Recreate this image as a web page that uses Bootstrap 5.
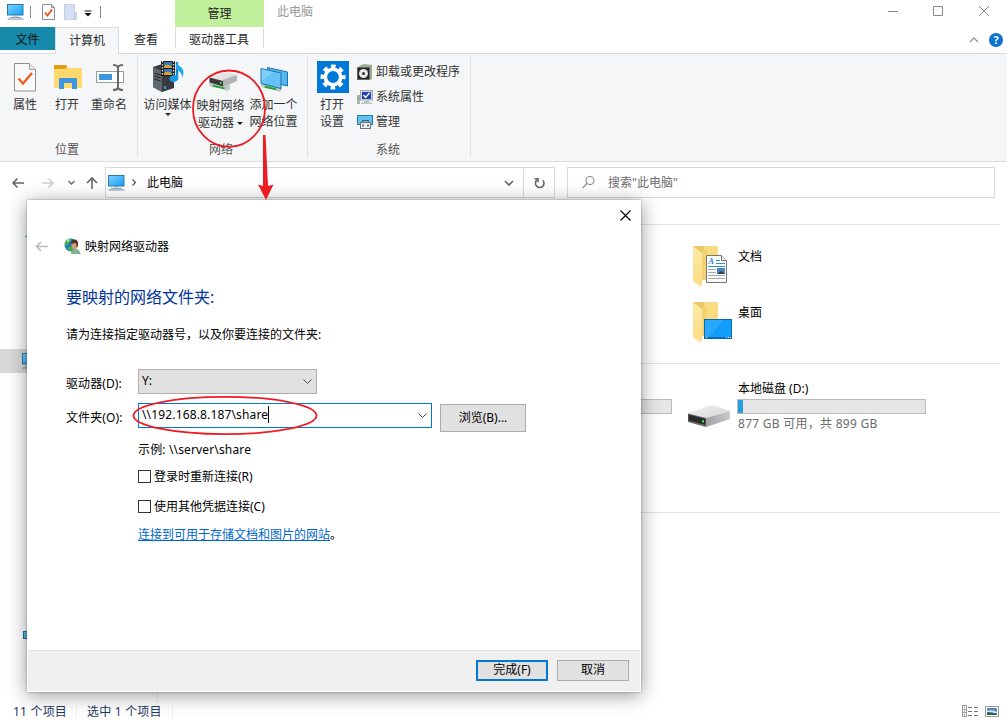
<!DOCTYPE html>
<html lang="zh-CN">

<head>
    <meta charset="utf-8">
    <meta name="viewport" content="width=device-width, initial-scale=1">
    <title>此电脑</title>
    <link href="https://cdn.jsdelivr.net/npm/bootstrap@5.3.0/dist/css/bootstrap.min.css" rel="stylesheet">
    <style>
        body {
            font-family: "Noto Sans", "Noto Sans CJK SC", sans-serif;
            font-size: 12px;
            line-height: 16px;
            color: #000;
            overflow: hidden;
        }
        svg { display: block; flex: none; }
        .explorer { width: 1007px; height: 721px; }

        /* title bar and tabs */
        .title-bar { height: 27px; }
        .quick-access { width: 175px; padding-left: 7px; }
        .quick-sep { width: 1px; height: 12px; background: #8c8c8c; }
        .ctx-title { width: 89px; height: 27px; background: #c0f09b; color: #222; padding-top: 1px; }
        .win-title { color: #999; padding-left: 13px; padding-bottom: 3px; }
        .tab-bar { height: 27px; border-bottom: 1px solid #dadbdc; }
        .tab-item { height: 26px; color: #262626; }
        .tab-file { width: 55px; height: 23px; background: #178aac; color: #111; padding-top: 2px; }
        .tab-active { width: 64px; height: 27px; background: #f5f6f7; border: 1px solid #dadbdc; border-bottom: 0; }
        .tab-view { width: 56px; padding-right: 2px; }
        .tab-tools { width: 89px; border: solid #dadbdc; border-width: 0 1px; height: 20px; margin-top: 1px; padding-top: 4px; padding-right: 1px; }

        /* ribbon */
        .ribbon { height: 108px; background: #f5f6f7; border-bottom: 1px solid #dadbdc; color: #333; }
        .ribbon-group { border-right: 1px solid #e2e3e4; margin: 2px 0 3px; }
        .ribbon-group .big-btn { width: 42px; line-height: 17px; text-align: center; white-space: nowrap; }
        .ribbon-group .wide-btn { width: 53px; }
        .big-icon { height: 40px; padding-top: 5px; }
        .group-name { color: #555; height: 16px; padding-right: 2px; }
        .down-mark { display: inline-block; border: 3px solid transparent; border-top-color: #222; border-bottom: 0; vertical-align: 2px; }
        .small-btn { height: 25px; gap: 3px; }

        /* address bar */
        .address-row { height: 41px; padding-top: 5px; }
        .nav-arrows { width: 105px; height: 31px; }
        .path-box { width: 450px; height: 31px; border: 1px solid #d9d9d9; }
        .refresh-btn { width: 31px; height: 29px; border-left: 1px solid #d9d9d9; }
        .search-box { width: 428px; height: 31px; margin-left: 12px; border: 1px solid #d9d9d9; color: #6d6d6d; padding-left: 13px; gap: 12px; }

        /* content */
        .side-nav { width: 158px; border-right: 1px solid #f0f0f0; }
        .side-item { height: 24px; padding-left: 22px; }
        .side-item.selected { background: #d9d9d9; }
        .main-pane { padding: 21px 7px 0 0; }
        .pane-section { border-top: 1px solid #e2e2e2; }
        .tile-col { width: 254px; }
        .tile-first { margin-left: 22px; }
        .tile { height: 56px; }
        .tile-name { padding-top: 3px; }
        .tile-icon { width: 50px; flex: none; }
        .usage { width: 189px; height: 15px; background: #e6e6e6; border: 1px solid #bcbcbc; }
        .usage-fill { height: 13px; background: #26a0da; }
        .usage-text { color: #6d6d6d; letter-spacing: .27px; }

        .status-bar { height: 19px; color: #1e395b; padding: 0 7px 0 13px; letter-spacing: .2px; }
        .status-sep { width: 1px; height: 12px; background: #efefef; }

        /* dialog */
        .map-dialog {
            position: absolute; left: 27px; top: 200px; width: 614px; height: 492px;
            background: #fff; border: 1px solid #fff; border-top: 0;
            box-shadow: 0 3px 18px rgba(0, 0, 0, .42), 0 0 2px rgba(0, 0, 0, .35);
        }
        .dlg-caption { height: 31px; padding-right: 10px; }
        .dlg-head { height: 30px; padding-left: 7px; }
        .dlg-body { padding-left: 38px; }
        .dlg-title { font-size: 16px; line-height: 24px; color: #039; margin: 24px 0 18px; }
        .field-label { width: 72px; letter-spacing: .1px; }
        .combo { height: 25px; border: 1px solid #adadad; background: #e1e1e1; padding: 0 4px 1px 3px; }
        .combo-drive { width: 179px; }
        .combo-folder { width: 294px; background: #fff; border-color: #0078d7; padding-bottom: 2px; }
        .path-text { letter-spacing: .15px; }
        .caret-bar { width: 1px; height: 17px; background: #000; }
        .win-btn { background: #e1e1e1; border: 1px solid #adadad; color: #000; font: inherit; padding: 0; height: 21px; width: 72px; }
        .win-btn-default { border: 2px solid #0078d7; }
        .browse-btn { width: 86px; height: 28px; margin: 1px 0 0 8px; }
        .indent-72 { padding-left: 72px; }
        .check-row { height: 16px; }
        .check-row span { padding-top: 1px; }
        .check-square { width: 13px; height: 13px; border: 1px solid #333; background: #fff; margin-right: 3px; }
        .dlg-link { color: #0066cc; }
        .dlg-footer { height: 41px; background: #f0f0f0; border-top: 1px solid #dfdfdf; padding: 0 11px 2px 0; gap: 9px; }
        .marks { position: absolute; left: 0; top: 0; pointer-events: none; }
    </style>
</head>

<body>
    <!-- shared shapes -->
    <svg width="0" height="0" class="position-absolute">
        <defs>
            <linearGradient id="screenFill" x1="0" y1="0" x2="1" y2="1">
                <stop offset="0" stop-color="#7fd0ff" />
                <stop offset="1" stop-color="#12a0f5" />
            </linearGradient>
            <linearGradient id="diskTop" x1="0" y1="0" x2="1" y2="1">
                <stop offset="0" stop-color="#f0f0f0" />
                <stop offset="1" stop-color="#cfcfd1" />
            </linearGradient>
            <linearGradient id="diskSide" x1="0" y1="0" x2="1" y2="0">
                <stop offset="0" stop-color="#a2a2a5" />
                <stop offset="1" stop-color="#c9c9cb" />
            </linearGradient>
            <linearGradient id="folderFront" x1="0" y1="0" x2="0" y2="1">
                <stop offset="0" stop-color="#ffeaa8" />
                <stop offset="1" stop-color="#fbdc82" />
            </linearGradient>
            <symbol id="pc" viewBox="0 0 17 16">
                <rect x=".5" y=".5" width="15.500" height="10.500" fill="url(#screenFill)" stroke="#2a7aa8" />
                <path d="M6 12h5M3 13.500h11" stroke="#8fa9bd" />
                <path d="M.5 15h16" stroke="#7b92ad" />
            </symbol>
            <symbol id="folder" viewBox="0 0 30 40">
                <path d="M0 0h25v34H9z" fill="#fadc80" />
                <path d="M0 0h12L9 8z" fill="#ecc768" />
                <path d="M9 7l5-5v32H9z" fill="#f0cd6c" opacity=".7" />
                <path d="M0 0l9 7v32l-2 1-7-5z" fill="url(#folderFront)" />
            </symbol>
            <symbol id="disk" viewBox="0 0 42 22">
                <path d="M0 8L24 0l18 6v8L18 22 0 17z" fill="url(#diskTop)" />
                <path d="M18 13l24-6.500v7.500L18 22z" fill="url(#diskSide)" />
                <path d="M0 8.500l18 4.500v9L0 17z" fill="#6e6e70" />
                <path d="M.5 9.500l17 4.300v6.200l-17-4.500z" fill="#2a2a2c" />
                <rect x="14" y="15.300" width="2" height="2.200" fill="#3cf04b" />
            </symbol>
            <symbol id="pipe" viewBox="0 0 24 10">
                <path d="M3 2.500l15 3.500" stroke="#2c9a3f" stroke-width="5" />
                <path d="M3 1.800l15 3.500" stroke="#79d37d" stroke-width="2" />
                <path d="M0 .500l4-.5v6L0 4zM17 4l4-1 2 1v4l-3 2-3-1z" fill="#c3c9c9" />
            </symbol>
        </defs>
    </svg>

    <div class="explorer d-flex flex-column position-relative bg-white">
        <div class="title-bar d-flex">
            <div class="quick-access d-flex align-items-center pb-1">
                <svg width="17" height="16"><use href="#pc" /></svg>
                <div class="quick-sep" style="margin:0 11px 0 6px"></div>
                <svg width="13" height="16" viewBox="0 0 13 16">
                    <path d="M.5.500h9l3 3v12H.5z" fill="#fafafa" stroke="#8e8e8e" />
                    <path d="M9.500.500v3h3" fill="none" stroke="#8e8e8e" />
                    <path d="M3 8.500l2.500 3 4.500-6" fill="none" stroke="#e8551d" stroke-width="1.800" />
                </svg>
                <svg width="13" height="16" viewBox="0 0 13 16" style="margin-left:9px">
                    <path d="M.5.500h10v8h2v7H.5z" fill="#d5e0f2" stroke="#c5d1e8" />
                    <path d="M10.500 8.500v7" stroke="#b6c5e0" />
                </svg>
                <svg width="8" height="7" viewBox="0 0 8 7" style="margin:3px 8px 0 7px">
                    <path d="M.500 1h7" stroke="#111" />
                    <path d="M.500 3h7L4 6.500z" fill="#111" />
                </svg>
                <div class="quick-sep"></div>
            </div>
            <div class="ctx-title d-flex align-items-center justify-content-center">管理</div>
            <div class="win-title d-flex align-items-center flex-grow-1">此电脑</div>
            <svg width="119" height="23" viewBox="0 0 119 23" fill="none" stroke="#8a8a8a">
                <path d="M0 11.500h10M45.500 6.500h9v9h-9zM91 6l10 10M101 6L91 16" />
            </svg>
        </div>

        <div class="tab-bar d-flex align-items-start">
            <div class="tab-file d-flex align-items-center justify-content-center">文件</div>
            <div class="tab-item tab-active d-flex align-items-center justify-content-center">计算机</div>
            <div class="tab-item tab-view d-flex align-items-center justify-content-center">查看</div>
            <div class="tab-item tab-tools text-center">驱动器工具</div>
            <svg class="ms-auto" width="38" height="24" viewBox="0 0 38 24">
                <path d="M1 15l4-4 4 4" fill="none" stroke="#999" stroke-width="1.300" />
                <circle cx="27" cy="13" r="7" fill="#0a72d0" />
                <text x="27" y="17" font-size="11" font-weight="bold" fill="#fff" text-anchor="middle">?</text>
            </svg>
        </div>

        <div class="ribbon d-flex">
            <div class="ribbon-group d-flex flex-column" style="width:138px">
                <div class="d-flex flex-grow-1" style="padding-left:4px">
                    <div class="big-btn">
                        <div class="big-icon d-flex justify-content-center">
                            <svg width="22" height="30" viewBox="0 0 22 30" style="margin-top:2px">
                                <path d="M.5.500h15l6 6V28H.5z" fill="#fafafa" stroke="#8e8e8e" />
                                <path d="M15.500.500v6h6" fill="#e8e8e8" stroke="#a0a0a0" />
                                <path d="M4.500 15.500l4.500 5 9-10.500" fill="none" stroke="#ee5f22" stroke-width="2.400" />
                            </svg>
                        </div>
                        属性
                    </div>
                    <div class="big-btn">
                        <div class="big-icon d-flex justify-content-center">
                            <svg width="28" height="28" viewBox="0 0 28 28" style="margin:3px 0 0 2px">
                                <path d="M0 2q0-1 1-1h11l2 3h14v20H0z" fill="#f9cf5f" />
                                <path d="M0 2q0-1 1-1h11l1 2-2 2H0z" fill="#dc9c16" />
                                <path d="M0 5h11l2-1h15v19q0 1-1 1H0z" fill="#ffd96f" />
                                <path d="M5 25V15q0-1 1-1h16q1 0 1 1v10h-5v-6h-8v6z" fill="#3c95de" />
                            </svg>
                        </div>
                        打开
                    </div>
                    <div class="big-btn">
                        <div class="big-icon d-flex justify-content-center">
                            <svg width="28" height="28" viewBox="0 0 28 28" style="margin:3px 0 0 2px">
                                <rect x=".5" y="7.500" width="27" height="11" fill="#fff" stroke="#9b9b9b" />
                                <rect x="3" y="10" width="13" height="6" fill="#3a96dd" />
                                <path d="M17 1q4 0 5 2 1-2 5-2M17 26q4 0 5-2 1 2 5 2M22 3v21" fill="none" stroke="#696969" stroke-width="2" />
                            </svg>
                        </div>
                        重命名
                    </div>
                </div>
                <div class="group-name text-center" style="padding-right:3px">位置</div>
            </div>

            <div class="ribbon-group d-flex flex-column" style="width:170px">
                <div class="d-flex flex-grow-1" style="padding-left:3px">
                    <div class="big-btn wide-btn">
                        <div class="big-icon d-flex justify-content-center">
                            <svg width="32" height="32" viewBox="0 0 32 32">
                                <path d="M1 6l12-4 9 4v21l-12 4-9-5z" fill="#363b40" />
                                <path d="M1 6l9 4v21l-9-5z" fill="#5f686e" />
                                <path d="M2.500 12l6 2M2.500 15l6 2M2.500 18l6 2" stroke="#1b1e20" />
                                <path d="M13 25v3" stroke="#37b7ff" stroke-width="1.500" />
                                <rect x="9" y="0" width="14" height="15" fill="#17191b" />
                                <path d="M10.500 0v15M21.500 0v15" stroke="#e6e6e6" stroke-width="1.300" stroke-dasharray="1.500 1.500" />
                                <rect x="12" y="1" width="8" height="6" fill="#3c78ba" />
                                <rect x="12" y="8" width="8" height="6" fill="#3c78ba" />
                                <path d="M12 5q4-3 8 1v1h-8zM12 12q4-3 8 1v1h-8z" fill="#d6a52d" />
                                <path d="M25 1v17" stroke="#1683cc" stroke-width="2.300" />
                                <ellipse cx="22" cy="17.500" rx="4.400" ry="3.400" fill="#159be8" transform="rotate(-15 22 17.500)" />
                                <path d="M24 0q1 4 5 6 4.500 4 1 10.500 0-6-6-8z" fill="#1da5ef" />
                            </svg>
                        </div>
                        访问媒体
                        <div style="line-height:2px"><span class="down-mark"></span></div>
                    </div>
                    <div class="big-btn wide-btn">
                        <div class="big-icon d-flex justify-content-center" style="height:41px">
                            <svg width="32" height="32" viewBox="0 0 32 32">
                                <svg x="4" y="21" width="22" height="9"><use href="#pipe" /></svg>
                                <path d="M5 16l15-5 12 3v6l-14 6-13-4z" fill="url(#diskTop)" />
                                <path d="M18 19l14-5v6l-14 6z" fill="#b4b4b7" />
                                <path d="M4.500 16.500L18 20v5.500L4.500 21.500z" fill="#38383a" />
                                <rect x="15" y="21" width="1.500" height="2" fill="#3cf04b" />
                            </svg>
                        </div>
                        映射网络<br>驱动器 <span class="down-mark"></span>
                    </div>
                    <div class="big-btn wide-btn">
                        <div class="big-icon d-flex justify-content-center">
                            <svg width="32" height="32" viewBox="0 0 32 32">
                                <svg x="2" y="22" width="24" height="9"><use href="#pipe" /></svg>
                                <path d="M9.500 6.500l20 4.500v14l-20-4.500z" fill="#55b6ee" stroke="#1d72ab" />
                                <path d="M3 7.500l20 4.500v15.500L3 22.500z" fill="#64c2f6" stroke="#1d72ab" />
                                <path d="M3.500 8l12 3-12 9z" fill="#9bdcff" opacity=".5" />
                            </svg>
                        </div>
                        添加一个<br>网络位置
                    </div>
                </div>
                <div class="group-name text-center" style="padding-right:3px">网络</div>
            </div>

            <div class="ribbon-group d-flex flex-column" style="width:163px">
                <div class="d-flex flex-grow-1" style="padding-left:3px">
                    <div class="big-btn">
                        <div class="big-icon d-flex justify-content-center">
                            <svg width="32" height="32" viewBox="0 0 32 32" style="margin-left:2px">
                                <rect width="32" height="32" fill="#0078d7" />
                                <circle cx="16" cy="16" r="10.500" fill="none" stroke="#fff" stroke-width="4" stroke-dasharray="4.500 3.747" stroke-dashoffset="2.250" />
                                <circle cx="16" cy="16" r="7.700" fill="none" stroke="#fff" stroke-width="3.600" />
                            </svg>
                        </div>
                        打开<br>设置
                    </div>
                    <div style="padding:3px 0 0 4px">
                        <div class="small-btn d-flex align-items-center">
                            <svg width="16" height="16" viewBox="0 0 16 16">
                                <path d="M2 2l5-2 8 1v14l-4 1z" fill="#9bab94" />
                                <rect x=".5" y="3.500" width="12" height="12" fill="#252525" stroke="#666" />
                                <circle cx="6.500" cy="9.500" r="4.500" fill="#e8e8e8" />
                                <circle cx="6.500" cy="9.500" r="1.500" fill="#333" />
                            </svg>
                            <span>卸载或更改程序</span>
                        </div>
                        <div class="small-btn d-flex align-items-center">
                            <svg width="16" height="16" viewBox="0 0 16 16">
                                <path d="M0 6h3v9H0z" fill="#aab1b4" />
                                <path d="M1 8v3" stroke="#3dc34c" />
                                <rect x="3.500" y="1.500" width="12" height="9.500" fill="#d5d8da" stroke="#a5a9ad" />
                                <rect x="5" y="3" width="9" height="7" fill="#1d3fb5" />
                                <path d="M6.500 6l2 2.500L12.500 4" fill="none" stroke="#fff" stroke-width="1.400" />
                                <path d="M7 11.500h5v2h3v1.500H4v-1.500h3z" fill="#bec5c8" />
                            </svg>
                            <span>系统属性</span>
                        </div>
                        <div class="small-btn d-flex align-items-center">
                            <svg width="16" height="16" viewBox="0 0 16 16">
                                <rect x=".5" y="1.500" width="15" height="9" fill="#65bff0" stroke="#267cad" />
                                <path d="M5.500 9V6.500h6V9" fill="none" stroke="#4c5c66" />
                                <rect x="3.500" y="8.500" width="10" height="6" fill="#edf0f2" stroke="#66747d" />
                                <path d="M6 10.500v2M11 10.500v2" stroke="#42505a" stroke-width="1.500" />
                            </svg>
                            <span>管理</span>
                        </div>
                    </div>
                </div>
                <div class="group-name text-center">系统</div>
            </div>
        </div>

        <div class="address-row d-flex">
            <svg class="nav-arrows" viewBox="0 0 105 31" fill="none" stroke="#666" stroke-width="1.600">
                <path d="M24 16H13M17.500 11.500L13 16l4.500 4.500" />
                <path d="M42 16h11M48.500 11.500L53 16l-4.500 4.500" stroke="#d0d0d0" />
                <path d="M68.500 14l3 3 3-3" stroke-width="1.400" />
                <path d="M92 22V11M87 16l5-5 5 5" />
            </svg>
            <div class="path-box d-flex align-items-center">
                <svg width="17" height="16" style="margin-left:2px"><use href="#pc" /></svg>
                <svg width="9" height="9" viewBox="0 0 9 9" style="margin:0 8px 0 5px" fill="none" stroke="#555" stroke-width="1.200"><path d="M2.500 1.500l3 3-3 3" /></svg>
                <span>此电脑</span>
                <svg class="ms-auto" width="10" height="8" viewBox="0 0 10 8" style="margin-right:9px" fill="none" stroke="#666" stroke-width="1.700"><path d="M1 2l4 4 4-4" /></svg>
                <div class="refresh-btn d-flex align-items-center justify-content-center">
                    <svg width="13" height="13" viewBox="0 0 13 13" fill="none" stroke="#666" stroke-width="1.600" style="margin-top:1px">
                        <path d="M9.800 3.200A4.300 4.300 0 1 1 4 2.900" />
                        <path d="M1.500 1.800H5v3.500" />
                    </svg>
                </div>
            </div>
            <div class="search-box d-flex align-items-center">
                <svg width="15" height="15" viewBox="0 0 15 15" fill="none" stroke="#8a8a8a" stroke-width="1.100">
                    <circle cx="9" cy="5.500" r="4" />
                    <path d="M6 8.500L1.500 13" />
                </svg>
                <span>搜索"此电脑"</span>
            </div>
        </div>

        <div class="d-flex flex-grow-1" style="min-height:0">
            <div class="side-nav">
                <div class="side-item" style="margin-top:25px">
                    <svg width="17" height="16" viewBox="0 0 17 16"><path d="M3 8.500h6" stroke="#6cbce6" stroke-width="1.500" /></svg>
                </div>
                <div class="side-item selected d-flex align-items-center" style="margin-top:97px">
                    <svg width="17" height="16"><use href="#pc" /></svg>
                </div>
                <div class="side-item d-flex align-items-center" style="margin-top:250px">
                    <svg width="17" height="13" viewBox="0 0 17 13"><rect x="1.500" y="2.500" width="14" height="7" fill="#5cb8e8" stroke="#2a6d92" /></svg>
                </div>
            </div>
            <div class="main-pane flex-grow-1">
                <div class="pane-section d-flex" style="height:139px;padding-top:21px">
                    <div class="tile-col tile-first"></div>
                    <div class="tile-col"></div>
                    <div class="tile-col">
                        <div class="tile d-flex">
                            <div class="tile-icon" style="padding-left:5px">
                                <svg width="42" height="42" viewBox="0 0 42 42">
                                    <use href="#folder" width="30" height="40" />
                                    <path d="M13.500 9.500h15l5 5v22h-20z" fill="#fbfbfb" stroke="#777" />
                                    <path d="M28.500 9.500v5h5" fill="#eee" stroke="#777" />
                                    <text x="15.500" y="18" font-size="8" font-weight="bold" font-style="italic" fill="#1d7fc4" style="font-family:'Liberation Serif',serif">A</text>
                                    <path d="M23 14.500h4M23 17.500h9M15 20.500h17" stroke="#2d93d4" />
                                    <path d="M15 23.500h8M15 26.500h8M15 29.500h17M15 32.500h17" stroke="#a8a8a8" />
                                    <rect x="24" y="22" width="8" height="6" fill="#4d83ba" />
                                    <path d="M24 28l4-3 4 3z" fill="#24433a" />
                                </svg>
                            </div>
                            <div class="tile-name">文档</div>
                        </div>
                        <div class="tile d-flex">
                            <div class="tile-icon" style="padding-left:5px">
                                <svg width="42" height="42" viewBox="0 0 42 42">
                                    <use href="#folder" width="30" height="40" />
                                    <rect x="11.500" y="17.500" width="27" height="19" fill="#109dfb" stroke="#0869ac" />
                                    <path d="M12 18h19L15 36h-3z" fill="#35adff" opacity=".7" />
                                    <path d="M12 35.500h26" stroke="#0c6fb5" />
                                    <path d="M13 35.500h1M33 35.500h1M35 35.500h1M37 35.500h1" stroke="#fff" />
                                </svg>
                            </div>
                            <div class="tile-name">桌面</div>
                        </div>
                    </div>
                </div>
                <div class="pane-section d-flex" style="height:149px;padding-top:17px">
                    <div class="tile-col tile-first"></div>
                    <div class="tile-col">
                        <div class="usage" style="margin:18px 0 0 49px"></div>
                    </div>
                    <div class="tile-col d-flex">
                        <div class="tile-icon">
                            <svg width="42" height="22" style="margin-top:24px"><use href="#disk" /></svg>
                        </div>
                        <div>
                            <div>本地磁盘 (D:)</div>
                            <div class="usage" style="margin:2px 0 2px -1px">
                                <div class="usage-fill" style="width:5px"></div>
                            </div>
                            <div class="usage-text">877 GB 可用，共 899 GB</div>
                        </div>
                    </div>
                </div>
                <div class="pane-section"></div>
            </div>
        </div>

        <div class="status-bar d-flex align-items-center">
            <span>11 个项目</span>
            <div class="status-sep" style="margin:0 10px 0 9px"></div>
            <span>选中 1 个项目</span>
            <div class="status-sep" style="margin-left:10px"></div>
            <svg class="ms-auto" width="38" height="14" viewBox="0 0 38 14" style="margin-bottom:2px">
                <rect x=".5" y="1.500" width="4" height="11" fill="#fff" stroke="#999" />
                <path d="M0 5.500h5M0 8.500h5" stroke="#999" />
                <path d="M2 3.500h1" stroke="#3a9a52" /><path d="M2 7h1" stroke="#4a7fe0" /><path d="M2 10.500h1" stroke="#d22" />
                <path d="M6 3.500h4M12 3.500h4M6 7.500h4M12 7.500h4M6 11.500h4M12 11.500h4" stroke="#777" />
                <rect x="23.500" y="2.500" width="13" height="10" fill="#fff" stroke="#999" />
                <rect x="25" y="4" width="10" height="7" fill="#5487c3" />
                <path d="M25 7q5-2 10 1v1H25z" fill="#d5e6f0" />
                <path d="M25 8q5 0 10 2v1H25z" fill="#315b58" />
            </svg>
        </div>

        <!-- map network drive dialog -->
        <div class="map-dialog d-flex flex-column">
            <div class="dlg-caption d-flex align-items-center justify-content-end">
                <svg width="11" height="11" viewBox="0 0 11 11" stroke="#000" stroke-width="1.100" style="margin:0 -1px 1px 0"><path d="M.500.500l10 10M10.500.500l-10 10" /></svg>
            </div>
            <div class="dlg-head d-flex align-items-center">
                <svg width="13" height="11" viewBox="0 0 13 11" fill="none" stroke="#bbb" stroke-width="1.600"><path d="M13 5.500H1.500M6 1L1.500 5.500 6 10" /></svg>
                <svg width="17" height="16" viewBox="0 0 17 16" style="margin:0 4px 0 16px">
                    <circle cx="7" cy="7" r="6.500" fill="#2273ce" />
                    <path d="M1 4q2-3.500 6-3.500L6 4 4 7 1 8zM3 10l4-2 2 3-2 2.500Q4 13 3 10z" fill="#41b244" />
                    <path d="M2.500 3q2-2 4-2L4 4z" fill="#c7f2c9" />
                    <path d="M7 16q0-5 4-5 5 0 5.500 5z" fill="#7cb598" />
                    <ellipse cx="10.500" cy="7" rx="3" ry="4.300" fill="#d99d74" />
                    <path d="M7 6q0-4.500 4-4.500 3.500.500 3 6l-1 2.500-1-5z" fill="#51351f" />
                </svg>
                <span style="padding-top:2px">映射网络驱动器</span>
            </div>
            <div class="dlg-body">
                <h1 class="dlg-title fw-normal">要映射的网络文件夹:</h1>
                <div>请为连接指定驱动器号，以及你要连接的文件夹:</div>
                <div class="d-flex align-items-center" style="margin-top:26px">
                    <div class="field-label" style="padding-top:5px">驱动器(D):</div>
                    <div class="combo combo-drive d-flex align-items-center justify-content-between">
                        <span>Y:</span>
                        <svg width="9" height="6" viewBox="0 0 9 6" fill="none" stroke="#444" style="margin-top:2px"><path d="M.5.500l4 4 4-4" /></svg>
                    </div>
                </div>
                <div class="d-flex align-items-start" style="margin-top:9px">
                    <div class="field-label" style="padding-top:7px">文件夹(O):</div>
                    <div class="combo combo-folder d-flex align-items-center">
                        <span class="path-text">\\192.168.8.187\share</span>
                        <div class="caret-bar"></div>
                        <svg class="ms-auto" width="9" height="6" viewBox="0 0 9 6" fill="none" stroke="#444" style="margin-top:2px"><path d="M.5.500l4 4 4-4" /></svg>
                    </div>
                    <button type="button" class="win-btn browse-btn">浏览(B)...</button>
                </div>
                <div class="indent-72">
                    <div class="path-text" style="margin-top:10px">示例: \\server\share</div>
                    <div class="check-row d-flex align-items-center" style="margin-top:10px"><div class="check-square"></div><span>登录时重新连接(R)</span></div>
                    <div class="check-row d-flex align-items-center" style="margin-top:14px"><div class="check-square"></div><span>使用其他凭据连接(C)</span></div>
                    <div style="margin-top:13px"><a href="#" class="dlg-link">连接到可用于存储文档和图片的网站</a>。</div>
                </div>
            </div>
            <div class="dlg-footer mt-auto d-flex align-items-center justify-content-end">
                <button type="button" class="win-btn win-btn-default">完成(F)</button>
                <button type="button" class="win-btn">取消</button>
            </div>
        </div>

        <!-- red pen marks -->
        <svg class="marks" width="1007" height="721" viewBox="0 0 1007 721">
            <g fill="none" stroke="#ed1c24" stroke-width="1.800">
                <ellipse cx="229" cy="108.700" rx="36" ry="38.200" />
                <ellipse cx="225" cy="415.500" rx="91.500" ry="18.700" />
            </g>
            <path d="M263 135h2.500l2.500 51 5.500-1.500-7.500 15.500-8-15.500 5 1.500z" fill="#ed1c24" />
        </svg>
    </div>
    <script src="https://cdn.jsdelivr.net/npm/bootstrap@5.3.0/dist/js/bootstrap.bundle.min.js"></script>
</body>

</html>
